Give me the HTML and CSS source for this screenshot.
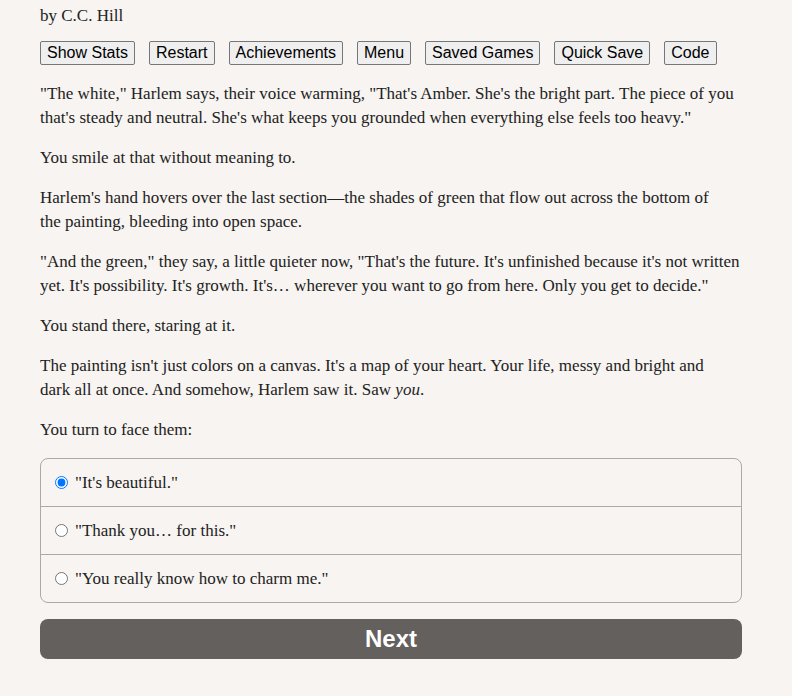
FILE: index.html
```html
<!DOCTYPE html>
<html lang="en">
<head>
    <meta charset="UTF-8">
    <meta name="viewport" content="width=device-width, initial-scale=1.0">
    <link rel="stylesheet" href="styles.css">
    <title>Painting</title>
</head>
<body>

<div id="container">
    <div class="author">by C.C. Hill</div>

    <div id="buttons">
        <button class="menuButton">Show Stats</button>
        <button class="menuButton">Restart</button>
        <button class="menuButton">Achievements</button>
        <button class="menuButton">Menu</button>
        <button class="menuButton">Saved Games</button>
        <button class="menuButton">Quick Save</button>
        <button class="menuButton">Code</button>
    </div>

    <div id="text">
        <p>"The white," Harlem says, their voice warming, "That's Amber. She's the bright part. The piece of you that's steady and neutral. She's what keeps you grounded when everything else feels too heavy."</p>
        <p>You smile at that without meaning to.</p>
        <p>Harlem's hand hovers over the last section—the shades of green that flow out across the bottom of <span class="keep">the painting,</span> bleeding into open space.</p>
        <p>"And the green," they say, a little quieter now, "That's the future. It's unfinished because it's not written yet. It's possibility. It's growth. It's… wherever you want to go from here. Only you get to decide."</p>
        <p>You stand there, staring at it.</p>
        <p>The painting isn't just colors on a canvas. It's a map of your heart. Your life, messy and bright and <span class="keep">dark all</span> at once. And somehow, Harlem saw it. Saw <i>you</i>.</p>
        <p>You turn to face them:</p>
    </div>

    <form class="choices">
        <label class="choice"><input type="radio" name="choice" checked> "It's beautiful."</label>
        <label class="choice"><input type="radio" name="choice"> "Thank you… for this."</label>
        <label class="choice"><input type="radio" name="choice"> "You really know how to charm me."</label>
    </form>

    <button class="next">Next</button>
</div>

</body>
</html>
```

FILE: styles.css
```css
body {
    margin: 0;
    background-color: #f7f4f1;
    color: #222;
    font-family: 'Liberation Serif', serif;
    font-size: 17px;
}

#container {
    width: 702px;
    padding: 6px 0 0 40px;
}

.author {
    line-height: 20px;
}

#buttons {
    display: flex;
    flex-wrap: wrap;
    gap: 14px;
    margin-top: 15px;
}

.menuButton {
    font-family: 'Liberation Sans', Arial, sans-serif;
    font-size: 16px;
    padding: 2px 6px;
    background-color: #efefef;
    border: 1px solid #767676;
    border-radius: 2px;
    color: #000;
}

#text {
    margin-top: 17px;
}

#text p {
    margin: 0 0 16px;
    line-height: 24px;
}

.keep {
    white-space: nowrap;
}

.choices {
    border: 1px solid #aaa;
    border-radius: 8px;
    margin-top: 15px;
}

.choice {
    display: flex;
    align-items: center;
    gap: 7px;
    height: 47px;
    padding-left: 14px;
    border-top: 1px solid #aaa;
}

.choice:first-child {
    border-top: none;
}

.choice input {
    margin: 0;
    width: 13px;
    height: 13px;
}

.next {
    display: block;
    width: 100%;
    height: 40px;
    margin-top: 16px;
    border: none;
    border-radius: 8px;
    background-color: #63605d;
    color: #fff;
    font-family: 'Liberation Sans', Arial, sans-serif;
    font-weight: bold;
    font-size: 24px;
}
```
